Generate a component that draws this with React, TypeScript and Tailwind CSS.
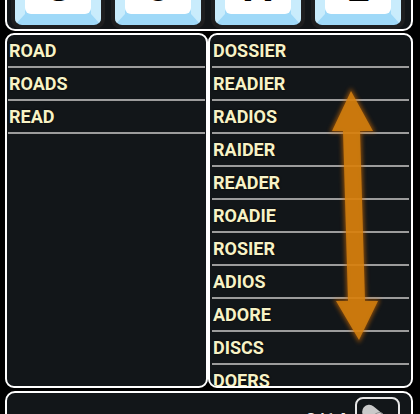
import type { FC } from "react";

const leftWords = ["ROAD", "ROADS", "READ"];
const rightWords = [
  "DOSSIER",
  "READIER",
  "RADIOS",
  "RAIDER",
  "READER",
  "ROADIE",
  "ROSIER",
  "ADIOS",
  "ADORE",
  "DISCS",
  "DOERS",
];
const tiles = ["S", "O", "A", "E"];

const Tile: FC<{ letter: string }> = ({ letter }) => (
  <div className="h-full w-[94px] rounded-[10px] bg-[#1e1f20] p-[4px]">
    <div className="h-full rounded-[7px] border-x-[10px] border-b-[11px] border-x-[#c9ecfc] border-b-[#9fd9f8] bg-[#9fd9f8]">
      <div className="flex h-full justify-center rounded-b-[6px] bg-white pt-[4px]">
        <span className="text-[40px] leading-[40px] font-bold text-black">{letter}</span>
      </div>
    </div>
  </div>
);

const WordRow: FC<{ word: string }> = ({ word }) => (
  <div className="mx-[1px] flex h-[33px] shrink-0 items-center border-b-2 border-[#9c9c9c] pl-[1px] text-[18px] font-bold text-[#f7f2c6] [text-shadow:0_0_2px_#000]">
    {word}
  </div>
);

const Arrow: FC = () => (
  <svg className="pointer-events-none absolute top-0 left-0" width="420" height="414" viewBox="0 0 420 414">
    <defs>
      <filter id="glow" x="-50%" y="-50%" width="200%" height="200%">
        <feGaussianBlur stdDeviation="2" />
      </filter>
    </defs>
    <polygon
      points="351,91 373,131 360,131 365,301 378,301 359,340 336,301 348,301 343,131 332,131"
      fill="#d86f00"
      stroke="#d86f00"
      strokeWidth="3"
      opacity="0.6"
      filter="url(#glow)"
    />
    <polygon
      points="351,91 373,131 360,131 365,301 378,301 359,340 336,301 348,301 343,131 332,131"
      fill="#d8830f"
      fillOpacity="0.82"
    />
  </svg>
);

const ClearIcon: FC = () => (
  <svg width="30" height="30" viewBox="0 0 30 30">
    <g transform="rotate(40 15 15)">
      <rect x="3" y="8" width="22" height="14" rx="7" fill="#c9c9c9" />
      <ellipse cx="21" cy="15" rx="5" ry="7" fill="#d6d6d6" stroke="#8f8f8f" strokeWidth="1" />
    </g>
  </svg>
);

export default function App() {
  return (
    <div className="relative h-[414px] w-[420px] overflow-hidden bg-black pr-[7px] pl-[5px] font-['Roboto',sans-serif]">
      <div className="-mt-[40px] h-[71px] rounded-b-[10px] border-2 border-t-0 border-white bg-[#121619] pl-[4px]">
        <div className="flex h-full gap-[6px]">
          {tiles.map((t, i) => (
            <Tile key={i} letter={t} />
          ))}
        </div>
      </div>

      <div className="mt-[2px] flex h-[355px]">
        <div className="flex w-[203px] flex-col overflow-hidden rounded-[9px] border-2 border-white bg-[#121619]">
          {leftWords.map((w) => (
            <WordRow key={w} word={w} />
          ))}
        </div>
        <div className="flex flex-1 flex-col overflow-hidden rounded-[9px] border-2 border-white bg-[#121619] pr-[1px] pl-[1px]">
          {rightWords.map((w) => (
            <WordRow key={w} word={w} />
          ))}
        </div>
      </div>

      <div className="mt-[3px] flex h-[60px] items-start justify-end gap-[8px] rounded-t-[10px] border-2 border-white bg-[#121619] pt-[4px] pr-[11px]">
        <span className="mt-[12px] text-[20px] leading-[24px] font-bold text-[#eeeeee]">0/14</span>
        <div className="flex h-[44px] w-[45px] items-start justify-start rounded-[8px] border-2 border-[#e6e6e6] pt-[1px] pl-[1px]">
          <ClearIcon />
        </div>
      </div>

      <Arrow />
    </div>
  );
}
